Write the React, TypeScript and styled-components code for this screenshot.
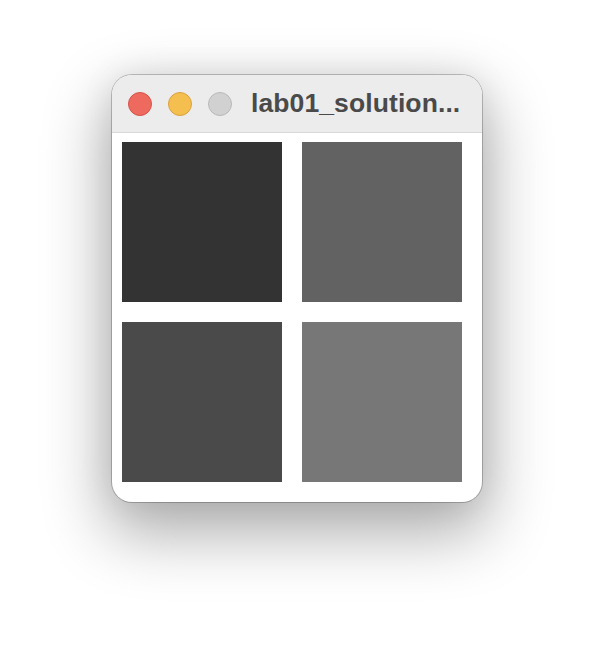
import React from "react";
import styled, { createGlobalStyle } from "styled-components";

const Global = createGlobalStyle`
  html, body { margin: 0; padding: 0; background: #ffffff; }
  body { font-family: "Liberation Sans", Arial, sans-serif; }
`;

const Page = styled.div`
  width: 594px;
  height: 650px;
  display: flex;
  justify-content: center;
  align-items: flex-start;
  padding-top: 75px;
  box-sizing: border-box;
`;

const Window = styled.div`
  width: 370px;
  border-radius: 20px;
  overflow: hidden;
  background: #ffffff;
  box-shadow: 0 0 0 1px rgba(0, 0, 0, 0.22), 0 26px 64px 6px rgba(0, 0, 0, 0.32),
    0 0 34px rgba(0, 0, 0, 0.08);
`;

const TitleBar = styled.div`
  height: 57px;
  background: #ececec;
  border-bottom: 1px solid #d9d9d9;
  display: flex;
  align-items: center;
  padding-left: 16px;
  box-sizing: content-box;
`;

const Lights = styled.div`
  display: flex;
  gap: 16px;
  margin-right: 19px;
`;

const Light = styled.span<{ $bg: string; $border: string }>`
  width: 22px;
  height: 22px;
  border-radius: 50%;
  background: ${(p) => p.$bg};
  border: 1px solid ${(p) => p.$border};
`;

const Title = styled.div`
  font-family: "Liberation Sans", Arial, sans-serif;
  font-weight: 700;
  font-size: 26.5px;
  letter-spacing: 0.1px;
  color: #4a4a4a;
  white-space: nowrap;
  margin-top: 0;
`;

const Canvas = styled.div`
  display: grid;
  grid-template-columns: 160px 160px;
  grid-template-rows: 160px 160px;
  gap: 20px;
  padding: 9px 20px 20px 10px;
`;

const Square = styled.div<{ $shade: string }>`
  background: ${(p) => p.$shade};
`;

const shades = ["#333333", "#626262", "#4a4a4a", "#777777"];

export default function App() {
  return (
    <>
      <Global />
      <Page>
        <Window>
          <TitleBar>
            <Lights>
              <Light $bg="#ee6a5f" $border="#d4534a" />
              <Light $bg="#f5bf4f" $border="#d9a13f" />
              <Light $bg="#d1d1d1" $border="#b9b9b9" />
            </Lights>
            <Title>lab01_solution...</Title>
          </TitleBar>
          <Canvas>
            {shades.map((s) => (
              <Square key={s} $shade={s} />
            ))}
          </Canvas>
        </Window>
      </Page>
    </>
  );
}
